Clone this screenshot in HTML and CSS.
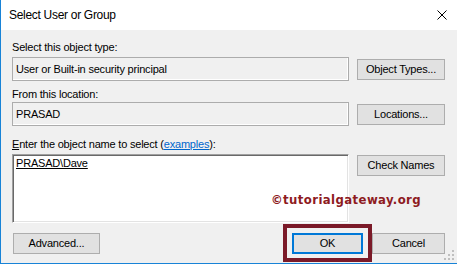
FILE: index.html
```html
<!DOCTYPE html>
<html lang="en">
<head>
<meta charset="utf-8">
<title>Select User or Group</title>
<link rel="stylesheet" href="styles.css">
</head>
<body>
<div class="window">
  <div class="titlebar">
    <span class="title">Select User or Group</span>
    <svg class="close" width="10" height="10" viewBox="0 0 10 10"><path d="M0.5 0.5 L9.5 9.5 M9.5 0.5 L0.5 9.5" stroke="#000" stroke-width="1" fill="none"/></svg>
  </div>
  <div class="content">
    <div class="label l1">Select this object type:</div>
    <div class="row">
      <div class="field">User or Built-in security principal</div>
      <button class="btn">Object Types...</button>
    </div>
    <div class="label l2">From this location:</div>
    <div class="row">
      <div class="field">PRASAD</div>
      <button class="btn">Locations...</button>
    </div>
    <div class="label l3"><u>E</u>nter the object name to select (<a class="link" href="#">examples</a>):</div>
    <div class="row top">
      <div class="textarea"><u>PRASAD\Dave</u></div>
      <button class="btn check">Check Names</button>
    </div>
    <div class="footer">
      <button class="btn advanced">Advanced...</button>
      <div class="spacer"></div>
      <button class="btn ok">OK</button>
      <button class="btn cancel">Cancel</button>
    </div>
  </div>
  <div class="watermark">©tutorialgateway.org</div>
  <div class="highlight"></div>
  <svg class="grip" width="12" height="12" viewBox="0 0 12 12">
    <g fill="#bfbfbf">
      <rect x="8" y="0" width="2" height="2"/>
      <rect x="4" y="4" width="2" height="2"/><rect x="8" y="4" width="2" height="2"/>
      <rect x="0" y="8" width="2" height="2"/><rect x="4" y="8" width="2" height="2"/><rect x="8" y="8" width="2" height="2"/>
    </g>
  </svg>
</div>
</body>
</html>
```
FILE: styles.css
```css
* { box-sizing: border-box; }
html, body { margin: 0; padding: 0; background: #f0f0f0; }
.window {
  position: relative;
  width: 457px;
  height: 264px;
  overflow: hidden;
  background: #f0f0f0;
  border-left: 1px solid #1883d7;
  border-bottom: 1px solid #1883d7;
  font-family: "Liberation Sans", Arial, sans-serif;
  font-size: 11px;
  letter-spacing: -0.2px;
  color: #000;
}
.titlebar {
  height: 30px;
  background: #fff;
  display: flex;
  align-items: center;
  padding-left: 8px;
}
.title { font-size: 12px; letter-spacing: -0.3px; }
.close { margin-left: auto; margin-right: 10px; }
.content { padding: 0 12px 0 11px; }
.label { line-height: 13px; height: 13px; white-space: nowrap; }
.l1 { margin-top: 11px; margin-bottom: 3px; }
.l2 { margin-top: 7px; margin-bottom: 1px; }
.l3 { margin-top: 12px; margin-bottom: 3px; }
.link { color: #0066cc; text-decoration: underline; }
.row { display: flex; align-items: center; gap: 8px; }
.row.top { align-items: flex-start; }
.field {
  flex: 1;
  height: 24px;
  line-height: 22px;
  padding-left: 3px;
  background: #f0f0f0;
  border: 1px solid #acacac;
  box-shadow: inset -1px -1px 0 #fff;
  white-space: nowrap;
}
.btn {
  width: 88px;
  height: 21px;
  padding: 0;
  background: #e1e1e1;
  border: 1px solid #adadad;
  font-family: inherit;
  font-size: 11px;
  letter-spacing: -0.2px;
  color: #000;
  text-align: center;
  line-height: 19px;
}
.textarea {
  flex: 1;
  height: 69px;
  padding: 2px 0 0 3px;
  background: #fff;
  border-top: 1px solid #a0a0a0;
  border-left: 1px solid #a0a0a0;
  border-right: 1px solid #fff;
  border-bottom: 1px solid #fff;
  box-shadow: inset 1px 1px 0 #696969, inset -1px -1px 0 #e3e3e3;
  line-height: 13px;
}
.check { margin-top: 1px; }
.footer { display: flex; margin-top: 10px; }
.spacer { flex: 1; }
.advanced { width: 87px; margin-left: 1px; }
.ok { width: 71px; border: 2px solid #0078d7; line-height: 17px; margin-right: 9px; }
.cancel { width: 73px; }
.watermark {
  position: absolute;
  left: 270px;
  top: 192px;
  font-family: "DejaVu Sans Condensed", "DejaVu Sans", sans-serif;
  font-stretch: condensed;
  font-weight: bold;
  font-size: 13px;
  letter-spacing: 0.4px;
  color: #8e1b1f;
  white-space: nowrap;
}
.highlight {
  position: absolute;
  left: 282px;
  top: 224px;
  width: 89px;
  height: 38px;
  border: 4px solid #7b1a28;
}
.grip { position: absolute; right: 1px; bottom: 1px; }
```
